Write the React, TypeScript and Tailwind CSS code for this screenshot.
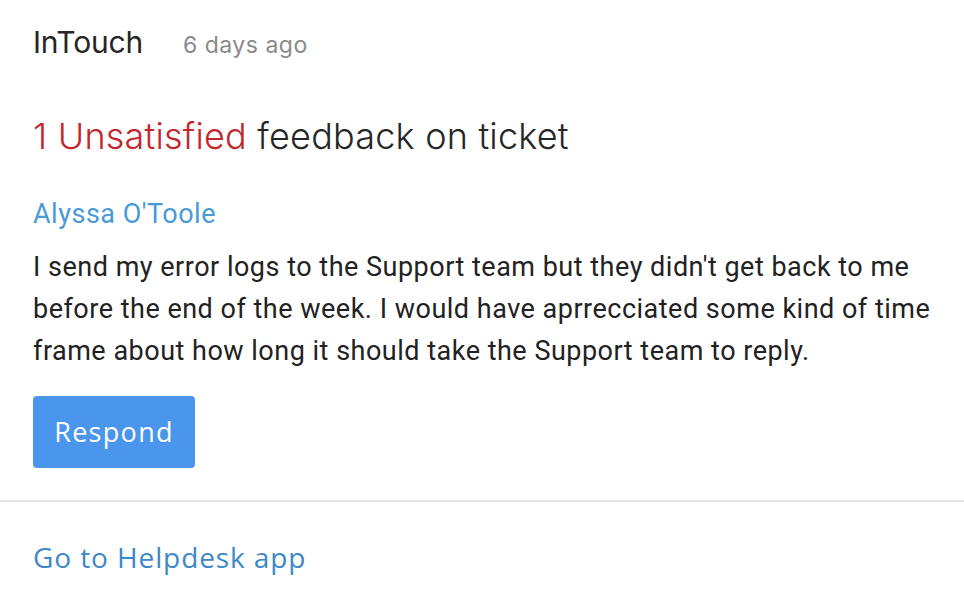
export default function App() {
  return (
    <div className="w-[964px] h-[614px] bg-white font-['Inter',sans-serif] overflow-hidden">
      <div className="px-[33px] pt-[20px]">
        <div className="flex items-baseline gap-[40px]">
          <span className="text-[30px] text-[#262626] tracking-[-0.2px]">InTouch</span>
          <span className="text-[23px] text-[#8a8a8a] tracking-[0.5px]">6 days ago</span>
        </div>
        <h1 className="mt-[49px] text-[36px] leading-[44px] text-[#262626] font-light tracking-[0.2px]">
          <span className="text-[#c2272d]">1 Unsatisfied</span> feedback on ticket
        </h1>
        <div className="mt-[39px] text-[27px] leading-[34px] text-[#4a9ad6] tracking-[0.5px] font-['Roboto',sans-serif]">
          Alyssa O'Toole
        </div>
        <p className="mt-[15px] text-[27px] leading-[42px] text-[#222] tracking-[0.5px] font-['Roboto',sans-serif] max-w-[900px]">
          I send my error logs to the Support team but they didn't get back to me before the end of the
          week. I would have aprrecciated some kind of time frame about how long it should take the Support
          team to reply.
        </p>
        <button className="mt-[24px] w-[162px] h-[72px] rounded-[4px] bg-[#4b96ed] text-white text-[27px] tracking-[1.3px] font-['Open_Sans',sans-serif]">
          Respond
        </button>
      </div>
      <div className="mt-[32px] h-[2px] bg-[#e6e6e6]" />
      <div className="px-[33px] pt-[34px]">
        <a className="text-[28px] text-[#3d88c9] tracking-[0.9px] font-['Open_Sans',sans-serif]">Go to Helpdesk app</a>
      </div>
    </div>
  );
}
